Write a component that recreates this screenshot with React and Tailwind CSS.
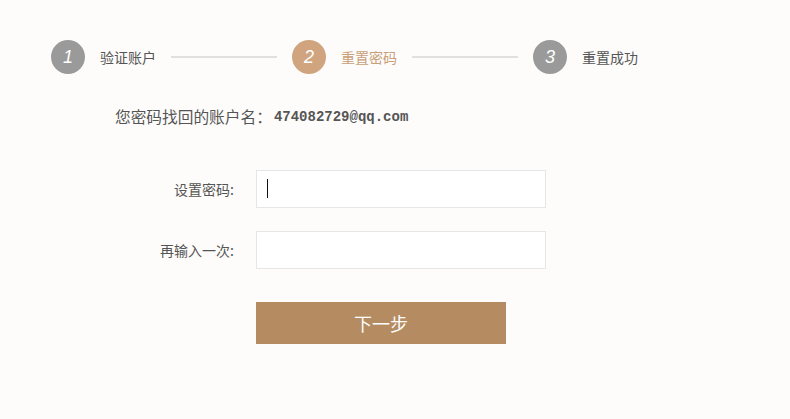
const steps = [
  { n: '1', label: '验证账户', active: false },
  { n: '2', label: '重置密码', active: true },
  { n: '3', label: '重置成功', active: false },
]

const cjk = { fontFamily: '"Noto Sans CJK SC", "Liberation Sans", sans-serif' }

function Steps() {
  return (
    <div className="flex items-center pl-[51px] pt-[40px]">
      {steps.map((s, i) => (
        <div key={s.n} className="flex items-center">
          <div
            className={
              s.active
                ? 'w-[34px] h-[34px] rounded-full bg-[#d0a47f] flex items-center justify-center text-white text-[18px] italic'
                : 'w-[34px] h-[34px] rounded-full bg-[#9a9a9a] flex items-center justify-center text-white text-[18px] italic'
            }
            style={{ fontFamily: '"Liberation Sans", sans-serif' }}
          >
            {s.n}
          </div>
          <span
            className={s.active ? 'ml-[15px] w-[56px] text-[14px] text-[#c89f79]' : 'ml-[15px] w-[56px] text-[14px] text-[#555]'}
            style={cjk}
          >
            {s.label}
          </span>
          {i < steps.length - 1 && <div className="ml-[15px] mr-[15px] w-[106px] h-[2px] bg-[#e0e0e0]" />}
        </div>
      ))}
    </div>
  )
}

function Field({ label, focused }) {
  return (
    <div className="flex items-center h-[38px]">
      <label className="w-[234px] text-right text-[14px] text-[#555]" style={cjk}>
        {label}
      </label>
      <div className="relative ml-[22px]">
        <input
          type="password"
          className="w-[290px] h-[38px] border border-[#e6e6e6] bg-white outline-none px-[10px] caret-transparent"
        />
        {focused && <span className="absolute left-[11px] top-[9px] w-px h-[19px] bg-[#111]" />}
      </div>
    </div>
  )
}

export default function App() {
  return (
    <div className="w-[790px] h-[419px] bg-[#fdfcfa] overflow-hidden">
      <Steps />
      <div className="mt-[33px] pl-[115px] h-[20px] leading-[20px] flex items-center text-[#555]">
        <span className="text-[15.7px]" style={{ fontFamily: '"Noto Sans CJK SC", sans-serif' }}>
          您密码找回的账户名：
        </span>
        <span className="ml-[2px] text-[14px] font-bold text-[#555]" style={{ fontFamily: '"Liberation Mono", monospace' }}>
          474082729@qq.com
        </span>
      </div>
      <div className="mt-[43px] flex flex-col gap-[23px]">
        <Field label="设置密码:" focused />
        <Field label="再输入一次:" />
      </div>
      <div className="mt-[33px] pl-[256px]">
        <button
          className="w-[250px] h-[42px] bg-[#b58b62] text-white text-[18px] flex items-center justify-center"
          style={cjk}
        >
          下一步
        </button>
      </div>
    </div>
  )
}
